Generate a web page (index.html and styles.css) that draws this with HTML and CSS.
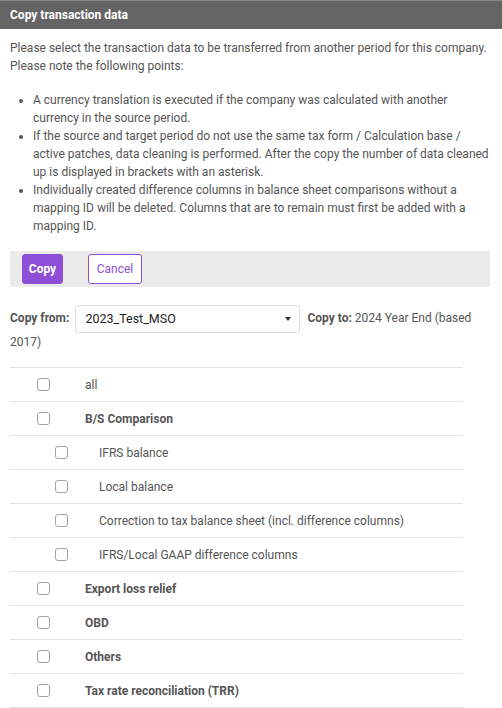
FILE: index.html
```html
<!DOCTYPE html>
<html lang="en">
<head>
<meta charset="utf-8">
<title>Copy transaction data</title>
<link rel="stylesheet" href="styles.css">
</head>
<body>
<div class="dialog">
  <div class="header">Copy transaction data</div>
  <div class="content">
    <p class="intro">Please select the transaction data to be transferred from another period for this company. Please note the following points:</p>
    <ul class="notes">
      <li>A currency translation is executed if the company was calculated with another currency in the source period.</li>
      <li>If the source and target period do not use the same tax form / Calculation base / active patches, data cleaning is performed. After the copy the number of data cleaned up is displayed in brackets with an asterisk.</li>
      <li>Individually created difference columns in balance sheet comparisons without a mapping ID will be deleted. Columns that are to remain must first be added with a mapping ID.</li>
    </ul>
    <div class="actions">
      <button class="btn btn-primary" type="button">Copy</button>
      <button class="btn btn-outline" type="button">Cancel</button>
    </div>
    <div class="copyline"><b class="label">Copy from:</b><span class="select"><span class="select-value">2023_Test_MSO</span><span class="caret"></span></span><b>Copy to:</b> 2024 Year End (based 2017)</div>
    <div class="items">
      <div class="row"><span class="cb"></span><span class="txt">all</span></div>
      <div class="row"><span class="cb"></span><span class="txt bold">B/S Comparison</span></div>
      <div class="row sub"><span class="cb"></span><span class="txt">IFRS balance</span></div>
      <div class="row sub"><span class="cb"></span><span class="txt">Local balance</span></div>
      <div class="row sub"><span class="cb"></span><span class="txt">Correction to tax balance sheet (incl. difference columns)</span></div>
      <div class="row sub"><span class="cb"></span><span class="txt">IFRS/Local GAAP difference columns</span></div>
      <div class="row"><span class="cb"></span><span class="txt bold">Export loss relief</span></div>
      <div class="row"><span class="cb"></span><span class="txt bold">OBD</span></div>
      <div class="row"><span class="cb"></span><span class="txt bold">Others</span></div>
      <div class="row"><span class="cb"></span><span class="txt bold">Tax rate reconciliation (TRR)</span></div>
    </div>
  </div>
</div>
</body>
</html>
```
FILE: styles.css
```css
html, body {
  margin: 0;
  padding: 0;
  background: #fff;
}
body {
  font-family: Roboto, "Liberation Sans", Arial, sans-serif;
  font-size: 12px;
  color: #555;
}
.header {
  background: #646464;
  border-top: 1px solid #8a8a8a;
  height: 28px;
  line-height: 28px;
  padding-left: 10px;
  color: #fff;
  font-weight: bold;
  font-size: 12px;
}
.content {
  padding: 10px 12px 0 10px;
}
.intro {
  margin: 0;
  line-height: 18px;
}
.notes {
  margin: 16px 0 0 0;
  padding-left: 23px;
  line-height: 18px;
}
.actions {
  margin-top: 16px;
  background: #ebebeb;
  padding: 3px 12px;
  display: flex;
  gap: 25px;
  height: 30px;
}
.btn {
  font-family: Roboto, "Liberation Sans", Arial, sans-serif;
  font-size: 12px;
  height: 30px;
  border-radius: 3px;
  padding: 0;
  cursor: pointer;
}
.btn-primary {
  background: #8d4fd7;
  border: 1px solid #8d4fd7;
  color: #fff;
  font-weight: bold;
  width: 41px;
}
.btn-outline {
  background: #fff;
  border: 1px solid #8d4fd7;
  color: #8d4fd7;
  width: 54px;
}
.copyline {
  margin-top: 18px;
  line-height: 18px;
}
.copyline .label {
  margin-right: 6px;
}
.select {
  display: inline-flex;
  align-items: center;
  justify-content: space-between;
  box-sizing: border-box;
  width: 225px;
  height: 28px;
  border: 1px solid #ddd;
  border-radius: 3px;
  padding: 0 8px 0 9px;
  margin-right: 7px;
  vertical-align: middle;
  color: #222;
  font-size: 12.5px;
}
.caret {
  width: 0;
  height: 0;
  border-left: 3.5px solid transparent;
  border-right: 3.5px solid transparent;
  border-top: 4px solid #333;
}
.items {
  margin-top: 16px;
  width: 453px;
  border-top: 1px solid #e2e2e2;
}
.row {
  display: flex;
  align-items: center;
  height: 33px;
  border-bottom: 1px solid #e2e2e2;
  padding-left: 27px;
}
.row.sub {
  padding-left: 45px;
}
.cb {
  box-sizing: border-box;
  width: 13px;
  height: 13px;
  border: 1px solid #a2a2a2;
  border-radius: 3px;
  background: #fff;
  flex: none;
}
.txt {
  margin-left: 35px;
}
.row.sub .txt {
  margin-left: 31px;
}
.bold {
  font-weight: bold;
}
```
